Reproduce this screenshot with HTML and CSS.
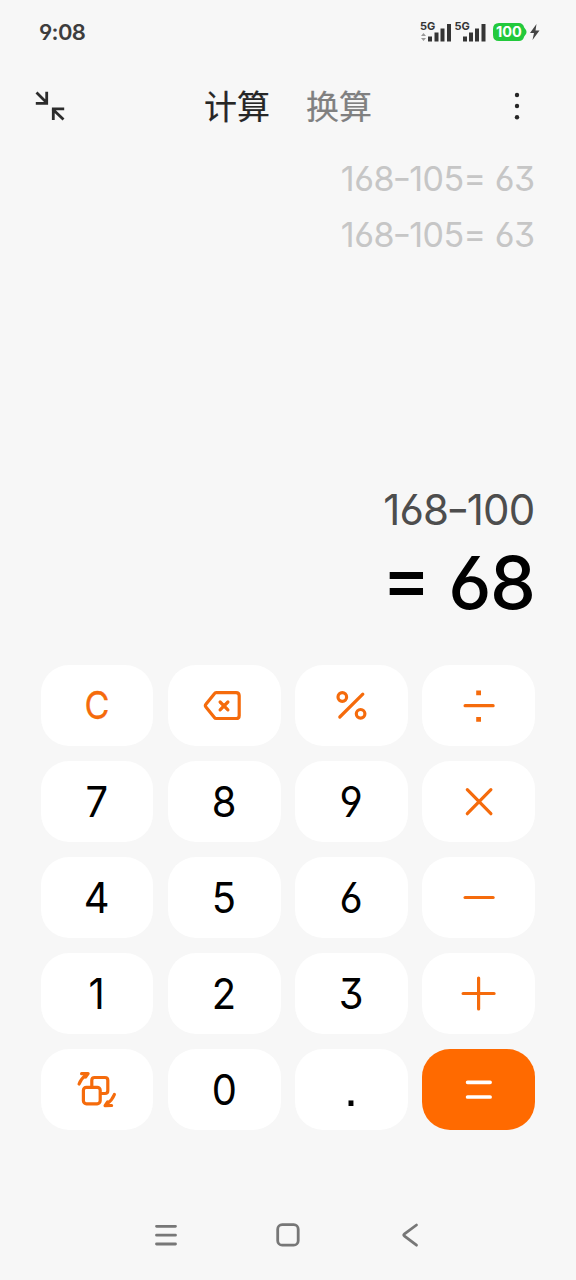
FILE: index.html
```html
<!DOCTYPE html>
<html lang="zh-CN">
<head>
<meta charset="utf-8">
<title>计算</title>
<link rel="stylesheet" href="styles.css">
</head>
<body>
<main class="phone">
  <div class="status">
    <span class="clock">9:08</span>
    <div class="indicators">
      <svg class="signals" width="68" height="24" viewBox="0 0 68 24">
        <text class="net" x="0" y="10.500">5G</text>
        <path class="faint" d="M1 17 3.500 14 6 17ZM1 19 3.500 22 6 19Z"/>
        <path d="M8 17.500h4v5h-4zM14.500 13.500h4v9h-4zM20.500 9.500h4v13h-4zM27 5h4v17.500h-4z"/>
        <text class="net" x="34.500" y="10.500">5G</text>
        <path d="M43 17.500h4v5h-4zM49 13.500h4v9h-4zM55 9.500h4v13h-4zM61.500 5h4v17.500h-4z"/>
      </svg>
      <div class="battery"><svg width="34" height="18" viewBox="0 0 34 18"><path d="M6 0H26Q30 0 31.200 4.500L33 7Q34 9 33 11L31.200 13.500Q30 18 26 18H6Q0 18 0 12V6Q0 0 6 0Z"/><text x="16" y="14.300" text-anchor="middle">100</text></svg></div>
      <svg class="bolt" width="10" height="16" viewBox="0 0 10 16"><path d="M6.500 0 0 9h4L2.500 16 9.500 6.500H5.500Z"/></svg>
    </div>
  </div>
  <header class="header">
    <svg class="shrink" width="30" height="30" viewBox="0 0 30 30"><path d="M1.500 1.500 12 12M.8 12.300h10.900V.8M28.500 28.500 17.500 18M18.300 29V17.800H29.200"/></svg>
    <nav class="tabs"><span class="tab active">计算</span><span class="tab">换算</span></nav>
    <svg class="more" width="6" height="28" viewBox="0 0 6 28"><circle cx="3" cy="3" r="2.200"/><circle cx="3" cy="14" r="2.200"/><circle cx="3" cy="25.300" r="2.200"/></svg>
  </header>
  <section class="display">
    <div class="history">168<span class="minus">-</span>105<span class="eq">=</span> 63</div>
    <div class="history">168<span class="minus">-</span>105<span class="eq">=</span> 63</div>
    <div class="expression">168<span class="minus">-</span>100</div>
    <div class="result"><span class="eq">=</span> 68</div>
  </section>
  <section class="keypad">
    <button class="key clear"><span>C</span></button>
    <button class="key"><svg class="icon" viewBox="0 0 48 48"><path d="M16.500 11.200H36.500Q39.600 11.200 39.600 14.300V33.900Q39.600 37 36.500 37H16.500Q15.500 37 14.800 36L6.300 25.500Q5.200 24.100 6.300 22.700L14.800 12.200Q15.500 11.200 16.500 11.200ZM20.500 20.500 28.300 28.300M28.300 20.500 20.500 28.300"/></svg></button>
    <button class="key"><svg class="icon" viewBox="0 0 48 48"><circle cx="15.700" cy="15.500" r="4.300"/><circle cx="34" cy="32.300" r="4.300"/><path d="M36.200 12.700 13.200 35.500"/></svg></button>
    <button class="key"><svg class="icon" viewBox="0 0 48 48"><path d="M10.500 24.200H38.500"/><path class="solid" d="M21.600 8.900h4.800v4.800h-4.800zM21.600 35.500h4.800v4.800h-4.800z"/></svg></button>
    <button class="key"><span>7</span></button>
    <button class="key"><span>8</span></button>
    <button class="key"><span>9</span></button>
    <button class="key"><svg class="icon" viewBox="0 0 48 48"><path d="M12.700 12.200 36.300 36.200M36.300 12.200 12.700 36.200"/></svg></button>
    <button class="key"><span>4</span></button>
    <button class="key"><span>5</span></button>
    <button class="key"><span>6</span></button>
    <button class="key"><svg class="icon" viewBox="0 0 48 48"><path d="M10.500 24H38.500"/></svg></button>
    <button class="key"><span>1</span></button>
    <button class="key"><span>2</span></button>
    <button class="key"><span>3</span></button>
    <button class="key"><svg class="icon" viewBox="0 0 48 48"><path d="M8.500 24H39.500M24 8.500V39.500"/></svg></button>
    <button class="key"><svg class="icon" viewBox="0 0 48 48"><rect x="10.800" y="21.800" width="16.800" height="16.500" rx="3"/><path d="M19.200 21V14.800Q19.200 12 22 12H32.300Q35.200 12 35.200 14.800V25.200Q35.200 28 32.300 28H28.500M6.500 18.500Q8.500 13 13.500 9.500M9 8.200 15.500 8 13 11.500M41.800 29Q39.500 34.700 34.500 38.300M39 40 32.500 40.200 35 36.500"/></svg></button>
    <button class="key"><span>0</span></button>
    <button class="key point"><span>.</span></button>
    <button class="key equals"><svg class="icon" viewBox="0 0 48 48"><path d="M13 16.800H35.500M13 31.500H35.500"/></svg></button>
  </section>
  <footer class="navbar">
    <svg width="24" height="26" viewBox="0 0 24 26"><path d="M2.500 4.300H21.500M2.500 13.200H21.500M2.500 22H21.500"/></svg>
    <svg width="24" height="26" viewBox="0 0 24 26"><rect x="1.700" y="2.700" width="20.500" height="20.500" rx="4.500"/></svg>
    <svg width="24" height="26" viewBox="0 0 24 26"><path d="M18.500 3 6.200 12.200Q5.300 13 6.200 13.800L18.500 23.200"/></svg>
  </footer>
</main>
</body>
</html>
```
FILE: styles.css
```css
* { box-sizing: border-box; }
body { margin: 0; background: #f7f7f7; font-family: Inter, "Noto Sans CJK SC", sans-serif; font-feature-settings: "cv03", "cv04", "cv09"; }
.phone { width: 576px; height: 1280px; display: flex; flex-direction: column; background: #f7f7f7; overflow: hidden; }

.status { height: 64px; padding: 0 36px 0 39px; display: flex; justify-content: space-between; align-items: center; }
.clock { font-size: 22px; font-weight: 600; letter-spacing: -.7px; color: #3d3d3d; line-height: 30px; }
.indicators { display: flex; align-items: center; }
.signals { fill: #353535; margin-top: -3px; }
.net { font: 700 11px Inter, sans-serif; }
.faint { fill: #999; }
.battery { margin-left: 5px; height: 18px; fill: #22c93c; }
.battery svg { display: block; }
.battery text { fill: #fff; font: 700 14.500px Inter, sans-serif; }
.bolt { fill: #444; margin-left: 3px; }

.header { height: 84px; padding: 0 56px 0 35px; display: flex; justify-content: space-between; align-items: center; }
.shrink { fill: none; stroke: #2c2c2c; stroke-width: 2.800; margin-top: -1px; }
.tabs { display: flex; gap: 36px; margin: -2px 3px 0 0; }
.tab { font: 400 33px/48px "Noto Sans CJK SC", sans-serif; color: #808080; -webkit-text-stroke: .2px; }
.tab.active { color: #262626; -webkit-text-stroke: .2px; }
.more { fill: #262626; margin-top: -1px; }

.display { height: 517px; padding: 3px 41.500px 0 0; display: flex; flex-direction: column; align-items: flex-end; white-space: pre; }
.history { font-size: 34px; line-height: 56px; height: 56px; letter-spacing: -.5px; color: #c6c6c6; }
.minus { display: inline-block; transform: translateY(-1px) scaleX(1.200); }
.eq { display: inline-block; }
.history .eq { transform: translateY(-1px); }
.expression { margin-top: 222px; font-size: 42px; line-height: 50px; letter-spacing: -.8px; color: #4d4d4d; }
.result { margin-top: 8px; font-size: 73px; line-height: 80px; letter-spacing: -1.500px; font-weight: 500; color: #000; }
.result .eq { transform: translate(-1px, -5px); }

.keypad { height: 465px; padding: 0 41px 0 40.500px; display: grid; grid-template-columns: repeat(4, 1fr); grid-template-rows: repeat(5, 81px); gap: 15px 14.500px; }
.key { border: 0; padding: 0; border-radius: 28px; background: #fff; color: #000; font: 400 42px/50px Inter, sans-serif; font-feature-settings: inherit; display: flex; align-items: center; justify-content: center; }
.key span { display: block; transform: scaleX(.95); }
.clear { color: #f56b0c; font-size: 38px; font-weight: 400; -webkit-text-stroke: .3px; }
.clear span { transform: translateY(-1px) scaleX(.9); }
.point { font: 400 52px/50px "Liberation Sans", Arial, sans-serif; }
.point span { transform: translate(-.5px, -2px); }
.icon { width: 48px; height: 48px; fill: none; stroke: #f56b0c; stroke-width: 3.200; stroke-linecap: round; stroke-linejoin: round; transform: translate(-.4px, -.5px); }
.icon .solid { fill: #f56b0c; stroke: none; }
.equals { background: #ff6a00; }
.equals .icon { stroke: #fff; stroke-width: 3.700; }

.navbar { height: 50px; margin-top: 80px; padding: 0 154px; display: flex; align-items: center; justify-content: space-between; }
.navbar svg { fill: none; stroke: #777; stroke-width: 2.800; stroke-linecap: round; stroke-linejoin: round; }
```
